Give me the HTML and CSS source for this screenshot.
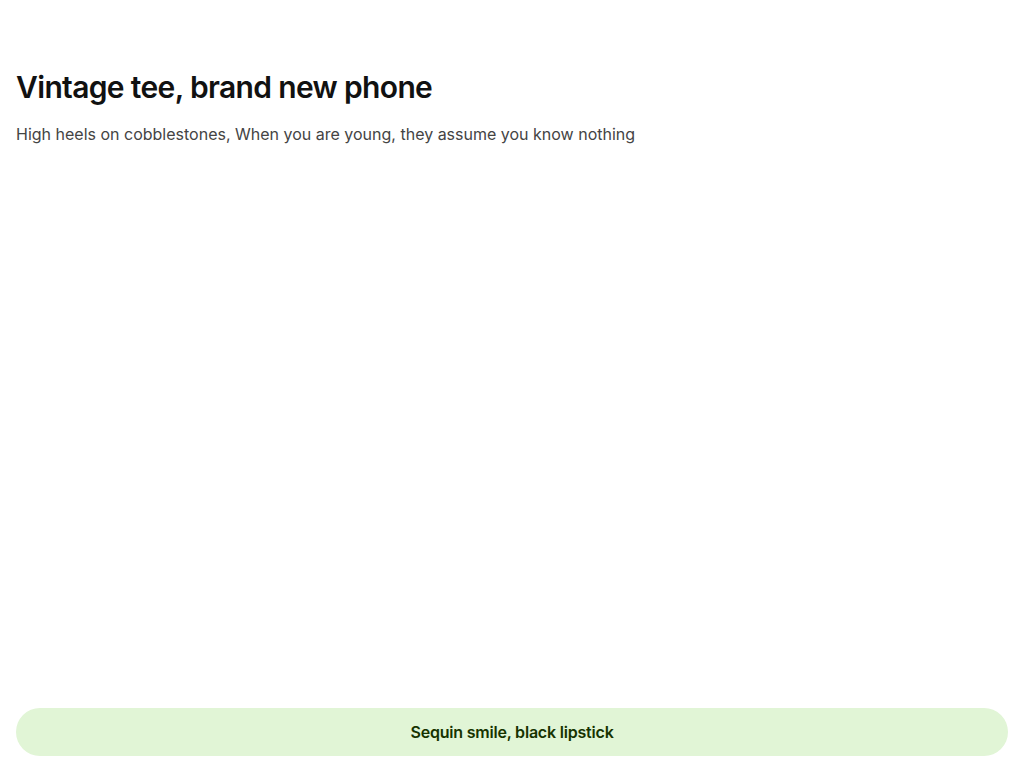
FILE: index.html
```html
<!DOCTYPE html>
<html lang="en">
<head>
<meta charset="utf-8">
<title>Vintage tee</title>
<link rel="stylesheet" href="styles.css">
</head>
<body>
<div class="page">
  <header class="intro">
    <h1 class="title">Vintage tee, brand new phone</h1>
    <p class="subtitle">High heels on cobblestones, When you are young, they assume you know nothing</p>
  </header>
  <div class="actions">
    <button class="primary" type="button">Sequin smile, black lipstick</button>
  </div>
</div>
</body>
</html>
```

FILE: styles.css
```css
* { box-sizing: border-box; }
html, body { margin: 0; padding: 0; background: #ffffff; }
body {
  font-family: Inter, "Noto Sans", "Liberation Sans", sans-serif;
  color: #111111;
}
.page {
  min-height: 100vh;
  display: flex;
  flex-direction: column;
  justify-content: space-between;
  padding: 67px 16px 12px;
}
.title {
  margin: 0;
  font-size: 30px;
  line-height: 40px;
  font-weight: 600;
  letter-spacing: -0.65px;
  color: #111111;
}
.subtitle {
  margin: 15px 0 0;
  font-size: 16px;
  line-height: 24px;
  color: #444444;
}
.actions { display: flex; }
.primary {
  flex: 1;
  height: 48px;
  border: none;
  border-radius: 24px;
  background: #e1f5d6;
  color: #163300;
  font-family: inherit;
  font-size: 16px;
  font-weight: 600;
  letter-spacing: -0.2px;
}
```
